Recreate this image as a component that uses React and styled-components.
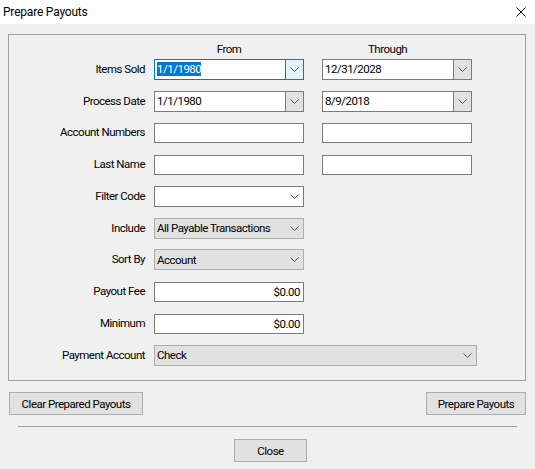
import React from 'react'
import styled, { createGlobalStyle, css } from 'styled-components'

const GlobalStyle = createGlobalStyle`
  html, body {
    margin: 0;
    padding: 0;
    background: #f0f0f0;
  }
  body {
    font-family: Roboto, 'Liberation Sans', Arial, sans-serif;
    font-size: 11.5px;
    letter-spacing: -0.5px;
    color: #000;
  }
`

const Window = styled.div`
  width: 535px;
  height: 469px;
  display: flex;
  flex-direction: column;
  background: #f0f0f0;
  overflow: hidden;
`

const TitleBar = styled.div`
  height: 24px;
  flex: none;
  display: flex;
  align-items: center;
  justify-content: space-between;
  background: #fff;
  padding: 0 9px 0 3px;
`

const Title = styled.span`
  font-size: 12px;
  letter-spacing: -0.2px;
`

const CloseX = styled.svg`
  width: 10px;
  height: 10px;
`

const Body = styled.div`
  display: flex;
  flex-direction: column;
  padding: 10px 9px 0 8px;
`

const GroupBox = styled.div`
  box-sizing: border-box;
  width: 518px;
  height: 347px;
  border: 1px solid #a0a0a0;
  display: grid;
  grid-template-columns: 145px 150px 168px;
  grid-template-rows: 23.75px;
  grid-auto-rows: 31.75px;
  align-items: start;
`

const ColHead = styled.div`
  align-self: center;
  padding-top: 4px;
  text-align: ${p => (p.$end ? 'left' : 'center')};
  padding-left: ${p => (p.$end ? '64px' : '0')};
`

const Label = styled.label`
  height: 21px;
  line-height: 21px;
  text-align: right;
  padding-right: 9px;
  white-space: nowrap;
`

const fieldBase = css`
  box-sizing: border-box;
  height: 21px;
  display: flex;
  align-items: center;
  white-space: nowrap;
`

const TextBox = styled.div`
  ${fieldBase}
  width: 150px;
  height: 20px;
  margin-top: 1px;
  background: #fff;
  border: 1px solid #7a7a7a;
  padding: 0 3px;
  justify-content: ${p => (p.$right ? 'flex-end' : 'flex-start')};
  justify-self: ${p => (p.$second ? 'end' : 'start')};
`

const Combo = styled.div`
  ${fieldBase}
  width: ${p => p.$width || 150}px;
  background: ${p => (p.$list ? '#e1e1e1' : '#fff')};
  border: 1px solid
    ${p => (p.$focus ? '#0078d7' : p.$list ? '#adadad' : '#7a7a7a')};
  justify-self: ${p => (p.$second ? 'end' : 'start')};
  ${p => p.$wide && 'grid-column: 2 / span 2;'}
`

const ComboText = styled.div`
  flex: 1;
  padding-left: 2px;
  overflow: hidden;
`

const Selected = styled.span`
  background: #0078d7;
  color: #fff;
  padding: 1px 0;
`

const DropButton = styled.div`
  width: 17px;
  align-self: stretch;
  display: flex;
  align-items: center;
  justify-content: center;
  ${p =>
    p.$split &&
    css`
      border-left: 1px solid ${p.$focus ? '#0078d7' : '#7a7a7a'};
      background: ${p.$focus ? '#e5f1fb' : '#e1e1e1'};
    `}
`

const Chevron = () => (
  <svg width="9" height="5" viewBox="0 0 9 5">
    <polyline points="0.5,0.5 4.5,4.5 8.5,0.5" fill="none" stroke="#555" strokeWidth="1" />
  </svg>
)

const ButtonRow = styled.div`
  width: 517px;
  margin-top: 11px;
  padding-left: 1px;
  display: flex;
  justify-content: space-between;
`

const Button = styled.button`
  box-sizing: border-box;
  height: 23px;
  width: ${p => p.$width}px;
  padding: 0;
  background: #e1e1e1;
  border: 1px solid #adadad;
  font-family: inherit;
  font-size: 11.5px;
  letter-spacing: inherit;
  color: #000;
`

const Separator = styled.div`
  width: 499px;
  height: 1px;
  margin: 11px 0 0 10px;
  background: #a0a0a0;
`

const Footer = styled.div`
  width: 518px;
  margin-top: 12px;
  padding-left: 7px;
  box-sizing: border-box;
  display: flex;
  justify-content: center;
`

const DateCombo = ({ value, focus, second }) => (
  <Combo $focus={focus} $second={second}>
    <ComboText>{focus ? <Selected>{value}</Selected> : value}</ComboText>
    <DropButton $split $focus={focus}>
      <Chevron />
    </DropButton>
  </Combo>
)

const ListCombo = ({ value, list, wide }) => (
  <Combo $list={list} $wide={wide} $width={wide ? 323 : 150}>
    <ComboText>{value}</ComboText>
    <DropButton>
      <Chevron />
    </DropButton>
  </Combo>
)

export default function App() {
  return (
    <Window>
      <GlobalStyle />
      <TitleBar>
        <Title>Prepare Payouts</Title>
        <CloseX viewBox="0 0 10 10">
          <path d="M0.5 0.5 L9.5 9.5 M9.5 0.5 L0.5 9.5" stroke="#000" strokeWidth="1" />
        </CloseX>
      </TitleBar>
      <Body>
        <GroupBox>
          <div />
          <ColHead>From</ColHead>
          <ColHead $end>Through</ColHead>

          <Label>Items Sold</Label>
          <DateCombo value="1/1/1980" focus />
          <DateCombo value="12/31/2028" second />

          <Label>Process Date</Label>
          <DateCombo value="1/1/1980" />
          <DateCombo value="8/9/2018" second />

          <Label>Account Numbers</Label>
          <TextBox />
          <TextBox $second />

          <Label>Last Name</Label>
          <TextBox />
          <TextBox $second />

          <Label>Filter Code</Label>
          <ListCombo value="" />
          <div />

          <Label>Include</Label>
          <ListCombo value="All Payable Transactions" list />
          <div />

          <Label>Sort By</Label>
          <ListCombo value="Account" list />
          <div />

          <Label>Payout Fee</Label>
          <TextBox $right>$0.00</TextBox>
          <div />

          <Label>Minimum</Label>
          <TextBox $right>$0.00</TextBox>
          <div />

          <Label>Payment Account</Label>
          <ListCombo value="Check" list wide />
        </GroupBox>

        <ButtonRow>
          <Button $width={134}>Clear Prepared Payouts</Button>
          <Button $width={100}>Prepare Payouts</Button>
        </ButtonRow>

        <Separator />

        <Footer>
          <Button $width={73}>Close</Button>
        </Footer>
      </Body>
    </Window>
  )
}
